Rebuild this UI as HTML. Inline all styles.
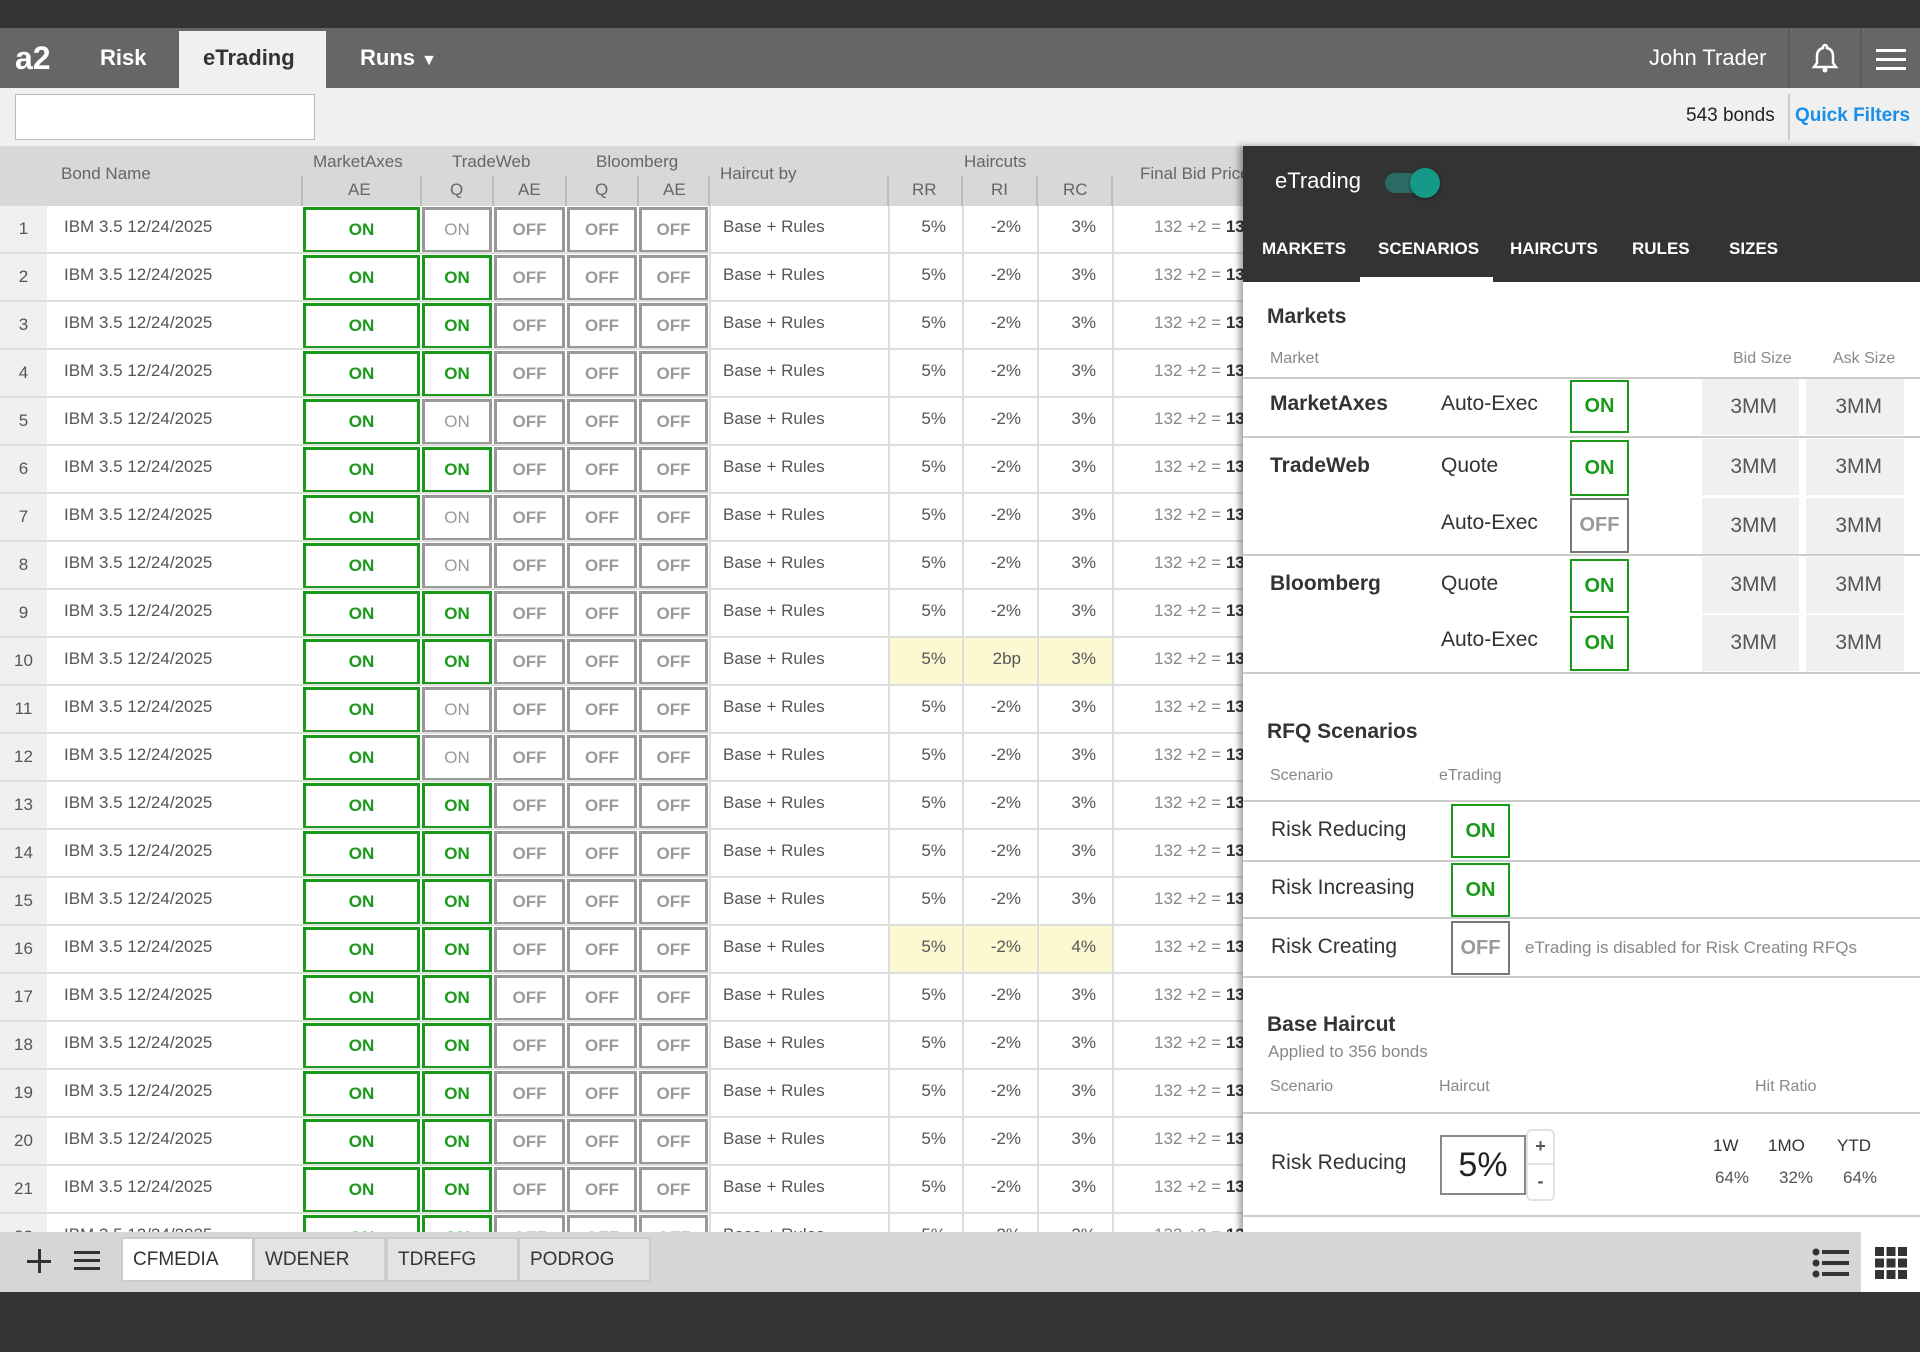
<!DOCTYPE html>
<html><head><meta charset="utf-8">
<style>
*{box-sizing:border-box;margin:0;padding:0}
body{width:1920px;height:1352px;position:relative;overflow:hidden;font-family:"Liberation Sans",sans-serif;background:#fff;color:#333}
.abs{position:absolute}
#top{left:0;top:0;width:1920px;height:28px;background:#333}
#nav{left:0;top:28px;width:1920px;height:60px;background:#666;color:#fff}
#nav .t{position:absolute;top:0;height:60px;line-height:60px;font-weight:bold;font-size:22px}
#filter{left:0;top:88px;width:1920px;height:58px;background:#f0f0f0}
#thead{left:0;top:146px;width:1243px;height:60px;background:#d8d8d8;color:#666;font-size:17px}
#thead span{position:absolute;white-space:nowrap}
#thead i{position:absolute;top:30px;height:30px;width:2px;background:#bbb}
#tbl{left:0;top:206px;width:1243px;height:1026px;overflow:hidden}
table{border-collapse:separate;border-spacing:0;table-layout:fixed;width:1243px}
td{height:48px;border-bottom:2px solid #dedede;font-size:17px;color:#555;white-space:nowrap;overflow:hidden;position:relative}
td.n{background:#f0f0f0;text-align:center;border-bottom:2px solid #dedede}
td.b{padding-left:17px;padding-bottom:4px}
td.x{padding:0}
td.x div{position:absolute;left:1px;right:1px;top:1px;bottom:-1px;border:3px solid #999;color:#999;font-weight:bold;text-align:center;line-height:40px;font-size:17px}
td.x div.on{border-color:#1a9a1a;color:#1a9a1a}
td.x div.g{font-weight:normal}
td.h{padding-left:12px;border-left:2px solid #dedede;padding-bottom:4px}
td.p{text-align:right;padding-right:16px;border-left:2px solid #dedede;padding-bottom:4px}
td.y{background:#fbf8d2}
td.fb{padding-left:40px;border-left:2px solid #dedede;color:#888;padding-bottom:4px}
td.fb b{color:#333}
#panel{left:1243px;top:146px;width:677px;height:1086px;background:#fff;box-shadow:-4px 0 6px rgba(0,0,0,.35);overflow:hidden}
#ph{left:0;top:0;width:677px;height:136px;background:#333;color:#fff}
.tab{position:absolute;top:93px;font-size:17px;font-weight:bold;color:#fff}
.pl{position:absolute;left:0;width:677px;height:2px;background:#ccc}
.pt{position:absolute;white-space:nowrap}
.hd{color:#888;font-size:16px}
.bx{position:absolute;width:59px;border:2px solid #1a9a1a;color:#1a9a1a;font-weight:bold;font-size:20px;text-align:center}
.bx.off{border-color:#777;color:#999}
.mm{position:absolute;background:#f0f0f0;font-size:21px;color:#555;text-align:right;padding-right:22px}
#bot{left:0;top:1232px;width:1920px;height:60px;background:#d6d6d6}
.bt{position:absolute;top:5px;height:45px;width:133px;background:#e3e3e3;border:2px solid #ccc;font-size:19px;line-height:41px;padding-left:10px;color:#333}
#dark{left:0;top:1292px;width:1920px;height:60px;background:#333}
</style></head><body>
<div id="top" class="abs"></div>
<div id="nav" class="abs">
 <div class="t" style="left:15px;font-size:32px">a2</div>
 <div class="t" style="left:100px">Risk</div>
 <div class="abs" style="left:179px;top:3px;width:147px;height:57px;background:#f0f0f0"></div>
 <div class="t" style="left:203px;color:#333">eTrading</div>
 <div class="t" style="left:360px">Runs <span style="font-size:16px">▼</span></div>
 <div class="t" style="left:1649px;font-weight:normal;font-size:22px">John Trader</div>
 <div class="abs" style="left:1788px;top:0;width:2px;height:60px;background:#5a5a5a"></div>
 <div class="abs" style="left:1860px;top:0;width:2px;height:60px;background:#5a5a5a"></div>
 <svg class="abs" style="left:1810px;top:14px" width="30" height="32" viewBox="0 0 30 32"><path d="M15 3a2 2 0 0 1 2 2v1c4 1 6 4 6 8v7l3 4H4l3-4v-7c0-4 2-7 6-8V5a2 2 0 0 1 2-2z" fill="none" stroke="#fff" stroke-width="2.5"/><circle cx="15" cy="28" r="2.5" fill="#fff"/></svg>
 <div class="abs" style="left:1876px;top:21px;width:30px;height:3px;background:#fff"></div>
 <div class="abs" style="left:1876px;top:30px;width:30px;height:3px;background:#fff"></div>
 <div class="abs" style="left:1876px;top:39px;width:30px;height:3px;background:#fff"></div>
</div>
<div id="filter" class="abs">
 <div class="abs" style="left:15px;top:6px;width:300px;height:46px;background:#fff;border:1px solid #bbb"></div>
 <div class="abs" style="left:1686px;top:17px;font-size:19px;color:#222">543 bonds</div>
 <div class="abs" style="left:1788px;top:6px;width:2px;height:46px;background:#ccc"></div>
 <div class="abs" style="left:1795px;top:17px;font-size:19px;color:#1a8fe8;font-weight:bold">Quick Filters</div>
</div>
<div id="thead" class="abs">
 <span style="left:61px;top:18px">Bond Name</span>
 <span style="left:313px;top:6px">MarketAxes</span>
 <span style="left:452px;top:6px">TradeWeb</span>
 <span style="left:596px;top:6px">Bloomberg</span>
 <span style="left:964px;top:6px">Haircuts</span>
 <span style="left:720px;top:18px">Haircut by</span>
 <span style="left:1140px;top:18px">Final Bid Price</span>
 <span style="left:348px;top:34px">AE</span><span style="left:450px;top:34px">Q</span><span style="left:518px;top:34px">AE</span><span style="left:595px;top:34px">Q</span><span style="left:663px;top:34px">AE</span>
 <span style="left:912px;top:34px">RR</span><span style="left:991px;top:34px">RI</span><span style="left:1063px;top:34px">RC</span>
 <i style="left:301px"></i><i style="left:420px"></i><i style="left:492px"></i><i style="left:565px"></i><i style="left:637px"></i><i style="left:708px"></i><i style="left:887px"></i><i style="left:961px"></i><i style="left:1036px"></i><i style="left:1111px"></i>
</div>
<div id="tbl" class="abs"><table>
<colgroup><col style="width:47px"><col style="width:255px"><col style="width:119px"><col style="width:72px"><col style="width:73px"><col style="width:72px"><col style="width:71px"><col style="width:179px"><col style="width:74px"><col style="width:75px"><col style="width:75px"><col style="width:131px"></colgroup>
<tr><td class="n">1</td><td class="b">IBM 3.5 12/24/2025</td><td class="x"><div class="on">ON</div></td><td class="x"><div class="g">ON</div></td><td class="x"><div>OFF</div></td><td class="x"><div>OFF</div></td><td class="x"><div>OFF</div></td><td class="h">Base + Rules</td><td class="p">5%</td><td class="p">-2%</td><td class="p">3%</td><td class="fb">132 +2 = <b>134</b></td></tr>
<tr><td class="n">2</td><td class="b">IBM 3.5 12/24/2025</td><td class="x"><div class="on">ON</div></td><td class="x"><div class="on">ON</div></td><td class="x"><div>OFF</div></td><td class="x"><div>OFF</div></td><td class="x"><div>OFF</div></td><td class="h">Base + Rules</td><td class="p">5%</td><td class="p">-2%</td><td class="p">3%</td><td class="fb">132 +2 = <b>134</b></td></tr>
<tr><td class="n">3</td><td class="b">IBM 3.5 12/24/2025</td><td class="x"><div class="on">ON</div></td><td class="x"><div class="on">ON</div></td><td class="x"><div>OFF</div></td><td class="x"><div>OFF</div></td><td class="x"><div>OFF</div></td><td class="h">Base + Rules</td><td class="p">5%</td><td class="p">-2%</td><td class="p">3%</td><td class="fb">132 +2 = <b>134</b></td></tr>
<tr><td class="n">4</td><td class="b">IBM 3.5 12/24/2025</td><td class="x"><div class="on">ON</div></td><td class="x"><div class="on">ON</div></td><td class="x"><div>OFF</div></td><td class="x"><div>OFF</div></td><td class="x"><div>OFF</div></td><td class="h">Base + Rules</td><td class="p">5%</td><td class="p">-2%</td><td class="p">3%</td><td class="fb">132 +2 = <b>134</b></td></tr>
<tr><td class="n">5</td><td class="b">IBM 3.5 12/24/2025</td><td class="x"><div class="on">ON</div></td><td class="x"><div class="g">ON</div></td><td class="x"><div>OFF</div></td><td class="x"><div>OFF</div></td><td class="x"><div>OFF</div></td><td class="h">Base + Rules</td><td class="p">5%</td><td class="p">-2%</td><td class="p">3%</td><td class="fb">132 +2 = <b>134</b></td></tr>
<tr><td class="n">6</td><td class="b">IBM 3.5 12/24/2025</td><td class="x"><div class="on">ON</div></td><td class="x"><div class="on">ON</div></td><td class="x"><div>OFF</div></td><td class="x"><div>OFF</div></td><td class="x"><div>OFF</div></td><td class="h">Base + Rules</td><td class="p">5%</td><td class="p">-2%</td><td class="p">3%</td><td class="fb">132 +2 = <b>134</b></td></tr>
<tr><td class="n">7</td><td class="b">IBM 3.5 12/24/2025</td><td class="x"><div class="on">ON</div></td><td class="x"><div class="g">ON</div></td><td class="x"><div>OFF</div></td><td class="x"><div>OFF</div></td><td class="x"><div>OFF</div></td><td class="h">Base + Rules</td><td class="p">5%</td><td class="p">-2%</td><td class="p">3%</td><td class="fb">132 +2 = <b>134</b></td></tr>
<tr><td class="n">8</td><td class="b">IBM 3.5 12/24/2025</td><td class="x"><div class="on">ON</div></td><td class="x"><div class="g">ON</div></td><td class="x"><div>OFF</div></td><td class="x"><div>OFF</div></td><td class="x"><div>OFF</div></td><td class="h">Base + Rules</td><td class="p">5%</td><td class="p">-2%</td><td class="p">3%</td><td class="fb">132 +2 = <b>134</b></td></tr>
<tr><td class="n">9</td><td class="b">IBM 3.5 12/24/2025</td><td class="x"><div class="on">ON</div></td><td class="x"><div class="on">ON</div></td><td class="x"><div>OFF</div></td><td class="x"><div>OFF</div></td><td class="x"><div>OFF</div></td><td class="h">Base + Rules</td><td class="p">5%</td><td class="p">-2%</td><td class="p">3%</td><td class="fb">132 +2 = <b>134</b></td></tr>
<tr><td class="n">10</td><td class="b">IBM 3.5 12/24/2025</td><td class="x"><div class="on">ON</div></td><td class="x"><div class="on">ON</div></td><td class="x"><div>OFF</div></td><td class="x"><div>OFF</div></td><td class="x"><div>OFF</div></td><td class="h">Base + Rules</td><td class="p y">5%</td><td class="p y">2bp</td><td class="p y">3%</td><td class="fb">132 +2 = <b>134</b></td></tr>
<tr><td class="n">11</td><td class="b">IBM 3.5 12/24/2025</td><td class="x"><div class="on">ON</div></td><td class="x"><div class="g">ON</div></td><td class="x"><div>OFF</div></td><td class="x"><div>OFF</div></td><td class="x"><div>OFF</div></td><td class="h">Base + Rules</td><td class="p">5%</td><td class="p">-2%</td><td class="p">3%</td><td class="fb">132 +2 = <b>134</b></td></tr>
<tr><td class="n">12</td><td class="b">IBM 3.5 12/24/2025</td><td class="x"><div class="on">ON</div></td><td class="x"><div class="g">ON</div></td><td class="x"><div>OFF</div></td><td class="x"><div>OFF</div></td><td class="x"><div>OFF</div></td><td class="h">Base + Rules</td><td class="p">5%</td><td class="p">-2%</td><td class="p">3%</td><td class="fb">132 +2 = <b>134</b></td></tr>
<tr><td class="n">13</td><td class="b">IBM 3.5 12/24/2025</td><td class="x"><div class="on">ON</div></td><td class="x"><div class="on">ON</div></td><td class="x"><div>OFF</div></td><td class="x"><div>OFF</div></td><td class="x"><div>OFF</div></td><td class="h">Base + Rules</td><td class="p">5%</td><td class="p">-2%</td><td class="p">3%</td><td class="fb">132 +2 = <b>134</b></td></tr>
<tr><td class="n">14</td><td class="b">IBM 3.5 12/24/2025</td><td class="x"><div class="on">ON</div></td><td class="x"><div class="on">ON</div></td><td class="x"><div>OFF</div></td><td class="x"><div>OFF</div></td><td class="x"><div>OFF</div></td><td class="h">Base + Rules</td><td class="p">5%</td><td class="p">-2%</td><td class="p">3%</td><td class="fb">132 +2 = <b>134</b></td></tr>
<tr><td class="n">15</td><td class="b">IBM 3.5 12/24/2025</td><td class="x"><div class="on">ON</div></td><td class="x"><div class="on">ON</div></td><td class="x"><div>OFF</div></td><td class="x"><div>OFF</div></td><td class="x"><div>OFF</div></td><td class="h">Base + Rules</td><td class="p">5%</td><td class="p">-2%</td><td class="p">3%</td><td class="fb">132 +2 = <b>134</b></td></tr>
<tr><td class="n">16</td><td class="b">IBM 3.5 12/24/2025</td><td class="x"><div class="on">ON</div></td><td class="x"><div class="on">ON</div></td><td class="x"><div>OFF</div></td><td class="x"><div>OFF</div></td><td class="x"><div>OFF</div></td><td class="h">Base + Rules</td><td class="p y">5%</td><td class="p y">-2%</td><td class="p y">4%</td><td class="fb">132 +2 = <b>134</b></td></tr>
<tr><td class="n">17</td><td class="b">IBM 3.5 12/24/2025</td><td class="x"><div class="on">ON</div></td><td class="x"><div class="on">ON</div></td><td class="x"><div>OFF</div></td><td class="x"><div>OFF</div></td><td class="x"><div>OFF</div></td><td class="h">Base + Rules</td><td class="p">5%</td><td class="p">-2%</td><td class="p">3%</td><td class="fb">132 +2 = <b>134</b></td></tr>
<tr><td class="n">18</td><td class="b">IBM 3.5 12/24/2025</td><td class="x"><div class="on">ON</div></td><td class="x"><div class="on">ON</div></td><td class="x"><div>OFF</div></td><td class="x"><div>OFF</div></td><td class="x"><div>OFF</div></td><td class="h">Base + Rules</td><td class="p">5%</td><td class="p">-2%</td><td class="p">3%</td><td class="fb">132 +2 = <b>134</b></td></tr>
<tr><td class="n">19</td><td class="b">IBM 3.5 12/24/2025</td><td class="x"><div class="on">ON</div></td><td class="x"><div class="on">ON</div></td><td class="x"><div>OFF</div></td><td class="x"><div>OFF</div></td><td class="x"><div>OFF</div></td><td class="h">Base + Rules</td><td class="p">5%</td><td class="p">-2%</td><td class="p">3%</td><td class="fb">132 +2 = <b>134</b></td></tr>
<tr><td class="n">20</td><td class="b">IBM 3.5 12/24/2025</td><td class="x"><div class="on">ON</div></td><td class="x"><div class="on">ON</div></td><td class="x"><div>OFF</div></td><td class="x"><div>OFF</div></td><td class="x"><div>OFF</div></td><td class="h">Base + Rules</td><td class="p">5%</td><td class="p">-2%</td><td class="p">3%</td><td class="fb">132 +2 = <b>134</b></td></tr>
<tr><td class="n">21</td><td class="b">IBM 3.5 12/24/2025</td><td class="x"><div class="on">ON</div></td><td class="x"><div class="on">ON</div></td><td class="x"><div>OFF</div></td><td class="x"><div>OFF</div></td><td class="x"><div>OFF</div></td><td class="h">Base + Rules</td><td class="p">5%</td><td class="p">-2%</td><td class="p">3%</td><td class="fb">132 +2 = <b>134</b></td></tr>
<tr><td class="n">22</td><td class="b">IBM 3.5 12/24/2025</td><td class="x"><div class="on">ON</div></td><td class="x"><div class="on">ON</div></td><td class="x"><div>OFF</div></td><td class="x"><div>OFF</div></td><td class="x"><div>OFF</div></td><td class="h">Base + Rules</td><td class="p">5%</td><td class="p">-2%</td><td class="p">3%</td><td class="fb">132 +2 = <b>134</b></td></tr>
</table></div>

<div id="panel" class="abs">
 <div id="ph" class="abs">
  <div class="pt" style="left:32px;top:22px;font-size:22px">eTrading</div>
  <div class="abs" style="left:142px;top:27px;width:48px;height:20px;border-radius:10px;background:#2a6b64"></div>
  <div class="abs" style="left:167px;top:22px;width:30px;height:30px;border-radius:15px;background:#17998a;box-shadow:0 1px 3px rgba(0,0,0,.5)"></div>
  <div class="tab" style="left:19px">MARKETS</div>
  <div class="tab" style="left:135px">SCENARIOS</div>
  <div class="tab" style="left:267px">HAIRCUTS</div>
  <div class="tab" style="left:389px">RULES</div>
  <div class="tab" style="left:486px">SIZES</div>
  <div class="abs" style="left:117px;top:131px;width:133px;height:5px;background:#fff"></div>
 </div>
 <div class="pt" style="left:24px;top:159px;font-size:21px;font-weight:bold">Markets</div>
 <div class="pt hd" style="left:27px;top:204px">Market</div>
 <div class="pt hd" style="left:490px;top:204px">Bid Size</div>
 <div class="pt hd" style="left:590px;top:204px">Ask Size</div>
 <div class="pl" style="top:231px"></div>
 <div class="pt" style="left:27px;top:246px;font-size:21px;font-weight:bold">MarketAxes</div>
 <div class="pt" style="left:198px;top:246px;font-size:21px">Auto-Exec</div>
 <div class="bx" style="left:327px;top:234px;height:53px;line-height:49px">ON</div>
 <div class="mm" style="left:459px;top:233px;width:97px;height:56px;line-height:56px">3MM</div>
 <div class="mm" style="left:563px;top:233px;width:98px;height:56px;line-height:56px">3MM</div>
 <div class="pl" style="top:290px"></div>
 <div class="pt" style="left:27px;top:308px;font-size:21px;font-weight:bold">TradeWeb</div>
 <div class="pt" style="left:198px;top:308px;font-size:21px">Quote</div>
 <div class="bx" style="left:327px;top:294px;height:56px;line-height:52px">ON</div>
 <div class="mm" style="left:459px;top:293px;width:97px;height:56px;line-height:56px">3MM</div>
 <div class="mm" style="left:563px;top:293px;width:98px;height:56px;line-height:56px">3MM</div>
 <div class="pt" style="left:198px;top:365px;font-size:21px">Auto-Exec</div>
 <div class="bx off" style="left:327px;top:352px;height:55px;line-height:51px">OFF</div>
 <div class="mm" style="left:459px;top:352px;width:97px;height:56px;line-height:56px">3MM</div>
 <div class="mm" style="left:563px;top:352px;width:98px;height:56px;line-height:56px">3MM</div>
 <div class="pl" style="top:408px"></div>
 <div class="pt" style="left:27px;top:426px;font-size:21px;font-weight:bold">Bloomberg</div>
 <div class="pt" style="left:198px;top:426px;font-size:21px">Quote</div>
 <div class="bx" style="left:327px;top:413px;height:54px;line-height:50px">ON</div>
 <div class="mm" style="left:459px;top:411px;width:97px;height:56px;line-height:56px">3MM</div>
 <div class="mm" style="left:563px;top:411px;width:98px;height:56px;line-height:56px">3MM</div>
 <div class="pt" style="left:198px;top:482px;font-size:21px">Auto-Exec</div>
 <div class="bx" style="left:327px;top:470px;height:55px;line-height:51px">ON</div>
 <div class="mm" style="left:459px;top:469px;width:97px;height:56px;line-height:56px">3MM</div>
 <div class="mm" style="left:563px;top:469px;width:98px;height:56px;line-height:56px">3MM</div>
 <div class="pl" style="top:526px"></div>

 <div class="pt" style="left:24px;top:574px;font-size:21px;font-weight:bold">RFQ Scenarios</div>
 <div class="pt hd" style="left:27px;top:621px">Scenario</div>
 <div class="pt hd" style="left:196px;top:621px">eTrading</div>
 <div class="pl" style="top:654px"></div>
 <div class="pt" style="left:28px;top:672px;font-size:21px">Risk Reducing</div>
 <div class="bx" style="left:208px;top:658px;height:54px;line-height:50px">ON</div>
 <div class="pl" style="top:714px"></div>
 <div class="pt" style="left:28px;top:730px;font-size:21px">Risk Increasing</div>
 <div class="bx" style="left:208px;top:717px;height:54px;line-height:50px">ON</div>
 <div class="pl" style="top:771px"></div>
 <div class="pt" style="left:28px;top:789px;font-size:21px">Risk Creating</div>
 <div class="bx off" style="left:208px;top:775px;height:54px;line-height:50px">OFF</div>
 <div class="pt" style="left:282px;top:792px;font-size:17px;color:#888">eTrading is disabled for Risk Creating RFQs</div>
 <div class="pl" style="top:830px"></div>

 <div class="pt" style="left:24px;top:867px;font-size:21px;font-weight:bold">Base Haircut</div>
 <div class="pt" style="left:25px;top:896px;font-size:17px;color:#888">Applied to 356 bonds</div>
 <div class="pt hd" style="left:27px;top:932px">Scenario</div>
 <div class="pt hd" style="left:196px;top:932px">Haircut</div>
 <div class="pt hd" style="left:512px;top:932px">Hit Ratio</div>
 <div class="pl" style="top:966px"></div>
 <div class="pt" style="left:28px;top:1005px;font-size:21px">Risk Reducing</div>
 <div class="abs" style="left:197px;top:989px;width:86px;height:60px;border:2px solid #888;font-size:34px;text-align:center;line-height:56px;color:#222">5%</div>
 <div class="abs" style="left:283px;top:983px;width:29px;height:72px;border:2px solid #e2e2e2;border-radius:6px;text-align:center;font-weight:bold;color:#555;font-size:18px">
  <div style="height:34px;line-height:30px;border-bottom:2px solid #e2e2e2">+</div><div style="line-height:32px">-</div></div>
 <div class="pt" style="left:470px;top:990px;font-size:17px;color:#333">1W</div>
 <div class="pt" style="left:525px;top:990px;font-size:17px;color:#333">1MO</div>
 <div class="pt" style="left:594px;top:990px;font-size:17px;color:#333">YTD</div>
 <div class="pt" style="left:472px;top:1022px;font-size:17px;color:#555">64%</div>
 <div class="pt" style="left:536px;top:1022px;font-size:17px;color:#555">32%</div>
 <div class="pt" style="left:600px;top:1022px;font-size:17px;color:#555">64%</div>
 <div class="pl" style="top:1069px"></div>
</div>

<div id="bot" class="abs">
 <div class="abs" style="left:27px;top:28px;width:24px;height:3px;background:#333"></div>
 <div class="abs" style="left:38px;top:17px;width:3px;height:24px;background:#333"></div>
 <div class="abs" style="left:74px;top:19px;width:26px;height:3px;background:#333"></div>
 <div class="abs" style="left:74px;top:27px;width:26px;height:3px;background:#333"></div>
 <div class="abs" style="left:74px;top:35px;width:26px;height:3px;background:#333"></div>
 <div class="bt" style="left:121px;background:#fff">CFMEDIA</div>
 <div class="bt" style="left:253px">WDENER</div>
 <div class="bt" style="left:386px">TDREFG</div>
 <div class="bt" style="left:518px">PODROG</div>
 <svg class="abs" style="left:1812px;top:16px" width="38" height="30" viewBox="0 0 38 30"><circle cx="4" cy="4" r="3.5" fill="#333"/><circle cx="4" cy="15" r="3.5" fill="#333"/><circle cx="4" cy="26" r="3.5" fill="#333"/><rect x="10" y="2" width="27" height="4" fill="#333"/><rect x="10" y="13" width="27" height="4" fill="#333"/><rect x="10" y="24" width="27" height="4" fill="#333"/></svg>
 <div class="abs" style="left:1861px;top:0;width:59px;height:60px;background:#fff"></div>
 <svg class="abs" style="left:1875px;top:15px" width="32" height="32" viewBox="0 0 32 32" fill="#333"><rect x="0" y="0" width="9" height="9"/><rect x="11.5" y="0" width="9" height="9"/><rect x="23" y="0" width="9" height="9"/><rect x="0" y="11.5" width="9" height="9"/><rect x="11.5" y="11.5" width="9" height="9"/><rect x="23" y="11.5" width="9" height="9"/><rect x="0" y="23" width="9" height="9"/><rect x="11.5" y="23" width="9" height="9"/><rect x="23" y="23" width="9" height="9"/></svg>
</div>
<div id="dark" class="abs"></div>
</body></html>
